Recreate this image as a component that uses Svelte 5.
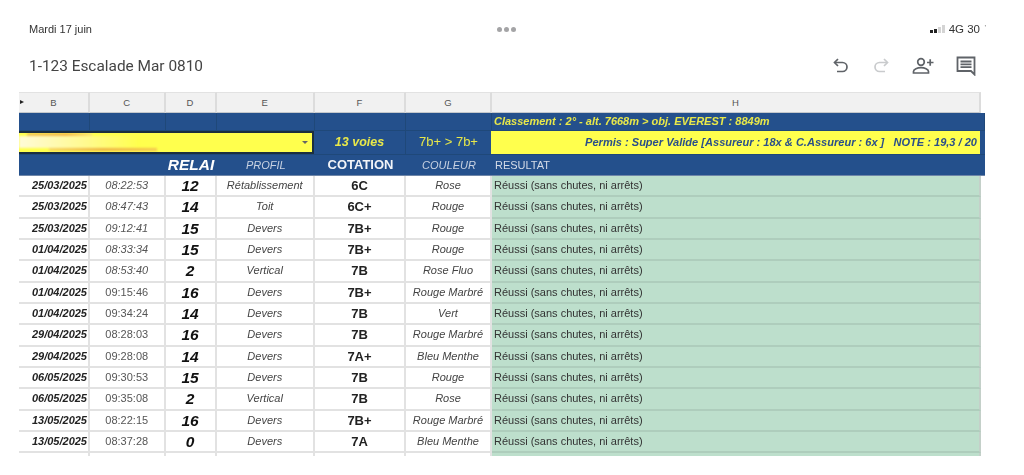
<script>
  const cols = ['B','C','D','E','F','G','H'];
  const rows = [
    ['25/03/2025','08:22:53','12','Rétablissement','6C','Rose',true],
    ['25/03/2025','08:47:43','14','Toit','6C+','Rouge',true],
    ['25/03/2025','09:12:41','15','Devers','7B+','Rouge',true],
    ['01/04/2025','08:33:34','15','Devers','7B+','Rouge',true],
    ['01/04/2025','08:53:40','2','Vertical','7B','Rose Fluo',true],
    ['01/04/2025','09:15:46','16','Devers','7B+','Rouge Marbré',false],
    ['01/04/2025','09:34:24','14','Devers','7B','Vert',false],
    ['29/04/2025','08:28:03','16','Devers','7B','Rouge Marbré',false],
    ['29/04/2025','09:28:08','14','Devers','7A+','Bleu Menthe',false],
    ['06/05/2025','09:30:53','15','Devers','7B','Rouge',false],
    ['06/05/2025','09:35:08','2','Vertical','7B','Rose',false],
    ['13/05/2025','08:22:15','16','Devers','7B+','Rouge Marbré',false],
    ['13/05/2025','08:37:28','0','Devers','7A','Bleu Menthe',false]
  ];
</script>

<div class="page">
  <div class="status">
    <span class="date">Mardi 17 juin</span>
    <span class="dots"><i></i><i></i><i></i></span>
    <span class="net">
      <span class="bars"><i class="on"></i><i class="on"></i><i></i><i></i></span>
      4G 30 <small>'</small>
    </span>
  </div>

  <div class="toolbar">
    <span class="title">1-123 Escalade Mar 0810</span>
    <div class="icons">
      <svg width="18" height="18" viewBox="0 0 18 18" fill="none" stroke="#5f6368" stroke-width="1.7"><path d="M6 2 2.500 5.500 6 9"/><path d="M3 5.500h7.500a4.500 4.500 0 0 1 0 9H5"/></svg>
      <svg width="18" height="18" viewBox="0 0 18 18" fill="none" stroke="#c9cbcd" stroke-width="1.7"><path d="M12 2 15.500 5.500 12 9"/><path d="M15 5.500H7.500a4.500 4.500 0 0 0 0 9H13"/></svg>
      <svg width="22" height="18" viewBox="0 0 22 18" fill="none" stroke="#5f6368" stroke-width="1.7"><circle cx="9" cy="5" r="3.300"/><path d="M1.500 16v-1.500c0-2.500 4-3.800 7.500-3.800s7.500 1.300 7.500 3.800V16z"/><path d="M15 5.500h6.500M18.200 2.200v6.600"/></svg>
      <svg width="20" height="20" viewBox="0 0 20 20" fill="none" stroke="#5f6368" stroke-width="1.8"><path d="M1.500 1.500h17v17l-3.500-3.500H1.500z"/><path d="M4.500 5.500h11M4.500 8.300h11M4.500 11.100h11"/></svg>
    </div>
  </div>

  <div class="sheet">
    <div class="heads">
      {#each cols as c, i}
        <div class="head">{#if i === 0}<span class="arrow"></span>{/if}{c}</div>
      {/each}
    </div>

    <div class="band">
      <div class="line r1">
        <div></div><div></div><div></div><div></div><div></div><div></div>
        <div class="ranking">Classement : 2° - alt. 7668m &gt; obj. EVEREST : 8849m</div>
      </div>
      <div class="line r2">
        <div class="select"><span class="smear"></span><span class="caret"></span></div>
        <div class="voies">13 voies</div>
        <div class="grade">7b+ &gt; 7b+</div>
        <div class="permit">Permis : Super Valide [Assureur : 18x &amp; C.Assureur : 6x ] &nbsp; NOTE : 19,3 / 20</div>
      </div>
      <div class="line r3">
        <div></div><div></div>
        <div class="relai">RELAI</div>
        <div class="lab">PROFIL</div>
        <div class="cot">COTATION</div>
        <div class="lab">COULEUR</div>
        <div class="res">RESULTAT</div>
      </div>
    </div>

    {#each rows as r}
      <div class="row">
        <div class="d">{r[0]}</div>
        <div class="t" class:it={r[6]}>{r[1]}</div>
        <div class="n">{r[2]}</div>
        <div class="p">{r[3]}</div>
        <div class="c">{r[4]}</div>
        <div class="p">{r[5]}</div>
        <div class="g">Réussi (sans chutes, ni arrêts)</div>
      </div>
    {/each}
    <div class="stub"><div></div><div></div><div></div><div></div><div></div><div></div><div></div></div>
  </div>
</div>

<style>
  :global(body) { margin: 0; background: #fff; }
  .page { width: 1024px; height: 475px; overflow: hidden; font-family: "Liberation Sans", Arial, sans-serif; color: #222; box-sizing: border-box; filter: blur(0.3px); }

  .status { height: 37px; display: flex; align-items: flex-start; padding: 23px 44px 0 29px; box-sizing: border-box; position: relative; font-size: 11px; color: #333; font-family: "Liberation Sans", sans-serif; }
  .date { line-height: 12px; }
  .dots { position: absolute; left: 497px; top: 26.500px; display: flex; gap: 2px; }
  .dots i { width: 5px; height: 5px; border-radius: 50%; background: #a4a4a6; }
  .net { margin-left: auto; display: flex; align-items: center; gap: 3px; font-size: 11.500px; line-height: 12px; position: relative; }
  .net small { font-size: 8px; color: #777; position: absolute; right: -6px; top: -1px; }
  .bars { display: flex; align-items: flex-end; gap: 1px; height: 8px; margin-right: 1px; }
  .bars i { width: 3px; background: #d4d4d4; }
  .bars i:nth-child(1) { height: 3px; }
  .bars i:nth-child(2) { height: 4px; }
  .bars i:nth-child(3) { height: 6px; }
  .bars i:nth-child(4) { height: 8px; }
  .bars i.on { background: #222; }

  .toolbar { height: 55px; display: flex; align-items: center; justify-content: space-between; padding: 5px 48px 2px 29px; box-sizing: border-box; }
  .title { font-family: Roboto, "Liberation Sans", sans-serif; font-size: 15.400px; color: #444; }
  .icons { display: flex; align-items: center; gap: 22px; }

  .sheet { margin-left: 19px; width: 966px; }
  .heads, .line.r3, .row, .stub { display: grid; grid-template-columns: 71px 75.500px 51px 98.500px 91px 86px 489px; }
  .heads { height: 21px; width: 961px; }
  .head { background: #f1f1f1; border-top: 1px solid #e2e2e2; border-right: 2px solid #dcdcdc; border-bottom: 1px solid #c4c8cc; box-sizing: border-box; display: flex; align-items: center; justify-content: center; font-size: 9.500px; color: #555; position: relative; }
  .arrow { position: absolute; left: 1px; top: 7px; border-left: 4px solid #222; border-top: 2.500px solid transparent; border-bottom: 2.500px solid transparent; }

  .band { background: #24508c; color: #fff; }
  .line { box-sizing: border-box; }
  .r1 { height: 18px; display: grid; grid-template-columns: 71px 75.500px 51px 98.500px 91px 86px 1fr; }
  .r1 > div { border-right: 1px solid #1f4879; border-bottom: 1px solid #1f4879; }
  .ranking { color: #e8e84a; font: italic bold 11px/17px "Liberation Sans", sans-serif; padding-left: 2px; }
  .r2 { height: 23px; display: grid; grid-template-columns: 295px 92px 85px 489px 5px; }
  .select { background: #ffff4d; border: 2px solid #1c2f3e; border-left: none; position: relative; overflow: hidden; }
  .smear {
    position: absolute; left: 0; top: 0; width: 150px; height: 19px; filter: blur(0.8px);
    background:
      linear-gradient(90deg, #f2c850, #f4b848 60%, #fbe870) 8px 0 / 65px 3px no-repeat,
      linear-gradient(90deg, #f8d860, #efb545 50%, #f4c850) 30px 15px / 108px 3px no-repeat,
      linear-gradient(90deg, #fffbd8, #fffa90 55%, #ffff4d) 0 3px / 120px 12px no-repeat;
  }
  .caret { position: absolute; right: 4px; top: 8px; border-top: 3.500px solid #666; border-left: 3.500px solid transparent; border-right: 3.500px solid transparent; }
  .voies { color: #e8e84a; font: italic bold 12.500px/22px "Liberation Sans", sans-serif; text-align: center; border-right: 1px solid #1f4879; }
  .grade { color: #e8e84a; font: 13px/22px "Liberation Sans", sans-serif; text-align: center; }
  .permit { background: #ffff4d; color: #2a4f8a; font: italic bold 11.050px/22px "Liberation Sans", sans-serif; text-align: right; padding-right: 3px; white-space: nowrap; box-sizing: border-box; }
  .r3 { height: 22px; border-top: 1px solid #1f4879; border-bottom: 1px solid #6f86a8; width: 966px; grid-template-columns: 71px 75.500px 51px 98.500px 91px 86px 494px; }
  .r3 > div { line-height: 20px; text-align: center; }
  .relai { font: italic bold 15.500px/20px "Liberation Sans", sans-serif; }
  .lab { font: italic 11px/21px "Liberation Sans", sans-serif; color: #c8d2e2; }
  .cot { font: bold 13px/20px "Liberation Sans", sans-serif; color: #f2f4f8; }
  .r3 .res { text-align: left; padding-left: 3px; font-size: 11px; color: #d4dbe7; }

  .row { height: 21.330px; width: 961px; }
  .row > div { border-right: 2px solid #e2e2e2; border-bottom: 2px solid #e2e2e2; box-sizing: border-box; text-align: center; white-space: nowrap; overflow: hidden; line-height: 19px; }
  .d { font: italic bold 11px/19px "Liberation Sans", sans-serif; color: #222; text-align: right !important; padding-right: 1px; }
  .t { font-size: 11px; color: #555; }
  .t.it { font-style: italic; }
  .n { font: italic bold 15.500px/19px "Liberation Sans", sans-serif; color: #111; }
  .p { font: italic 11px/19px "Liberation Sans", sans-serif; color: #444; }
  .c { font: bold 13px/19px "Liberation Sans", sans-serif; color: #222; }
  .row .g { background: #bddfcc; text-align: left; padding-left: 2px; font-size: 11px; color: #333; border-color: #aecdbc; border-right-color: #c4d0c9; }

  .stub { height: 3px; width: 961px; }
  .stub > div { border-right: 2px solid #e2e2e2; }
  .stub > div:last-child { background: #bddfcc; border-right-color: #c4d0c9; }
</style>
